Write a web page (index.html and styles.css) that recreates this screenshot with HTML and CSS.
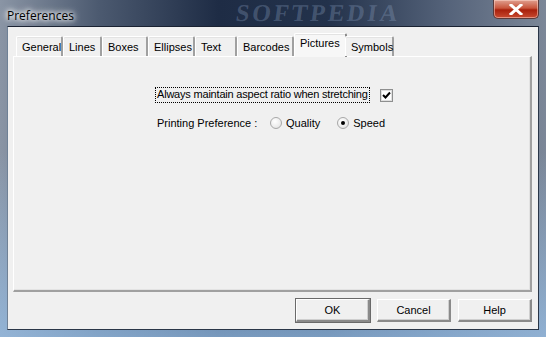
FILE: index.html
```html
<!DOCTYPE html>
<html lang="en">
<head>
  <meta charset="UTF-8">
  <title>Preferences</title>
  <link rel="stylesheet" href="styles.css">
</head>
<body>
  <div class="window">
    <div class="titlebar">
      <span class="title">Preferences</span>
      <span class="watermark">SOFTPEDIA</span>
      <button class="close" type="button">
        <svg width="14" height="11" viewBox="0 0 14 11">
          <path d="M2 1 L12 10 M12 1 L2 10" stroke="#ffffff" stroke-width="3" stroke-linecap="square"/>
        </svg>
      </button>
    </div>
    <div class="client">
      <div class="tabs">
        <div class="tab">General</div>
        <div class="tab">Lines</div>
        <div class="tab">Boxes</div>
        <div class="tab">Ellipses</div>
        <div class="tab tab-text">Text</div>
        <div class="tab">Barcodes</div>
        <div class="tab active">Pictures</div>
        <div class="tab">Symbols</div>
      </div>
      <div class="panel">
        <div class="row aspect-row">
          <span class="focus-label">Always maintain aspect ratio when stretching</span>
          <span class="checkbox">
            <svg width="9" height="9" viewBox="0 0 9 9">
              <path d="M1 4 L3.5 6.5 L8 1.5" stroke="#000" stroke-width="2" fill="none"/>
            </svg>
          </span>
        </div>
        <div class="row print-row">
          <span class="print-label">Printing Preference :</span>
          <span class="radio"></span>
          <span class="radio-label">Quality</span>
          <span class="radio checked"></span>
          <span class="radio-label">Speed</span>
        </div>
      </div>
      <div class="buttons">
        <button class="btn btn-default" type="button">OK</button>
        <button class="btn" type="button">Cancel</button>
        <button class="btn" type="button">Help</button>
      </div>
    </div>
  </div>
</body>
</html>
```

FILE: styles.css
```css
* {
    margin: 0;
    padding: 0;
    box-sizing: border-box;
}

body {
    width: 546px;
    height: 337px;
    overflow: hidden;
    font-family: 'Liberation Sans', Arial, sans-serif;
    font-size: 11px;
    color: #000;
    background: #1f2e47;
}

.window {
    width: 546px;
    height: 337px;
    display: flex;
    flex-direction: column;
    background:
        linear-gradient(180deg, rgba(0, 0, 0, 0) 45%, rgba(150, 190, 230, 0.75) 100%),
        linear-gradient(90deg, #8a95a5 0%, #4c5a70 18%, #1e2c45 40%, #23324b 60%, #55637a 82%, #7c8798 100%);
}

.titlebar {
    height: 28px;
    display: flex;
    align-items: flex-start;
    position: relative;
}

.title {
    padding: 7px 0 0 7px;
    font-family: 'Open Sans', 'Liberation Sans', sans-serif;
    font-size: 12px;
    color: #000;
    text-shadow: 0 0 8px #fff, 0 0 6px #fff, 0 0 4px #fff;
    position: relative;
    z-index: 1;
}

.watermark {
    position: absolute;
    left: 236px;
    top: 1px;
    font-family: 'Liberation Serif', serif;
    font-weight: bold;
    font-size: 24px;
    line-height: 24px;
    letter-spacing: 3px;
    color: rgba(150, 172, 205, 0.3);
    transform: skewX(-8deg);
}

.close {
    position: absolute;
    left: 493px;
    top: 0;
    width: 46px;
    height: 19px;
    border: 1px solid #5a3a3a;
    border-top: none;
    border-radius: 0 0 5px 5px;
    background: linear-gradient(180deg, #e0a090 0%, #c8553c 45%, #a8200c 55%, #c84a30 100%);
    box-shadow: inset 0 0 0 1px rgba(255, 220, 210, 0.5);
    display: flex;
    align-items: center;
    justify-content: center;
}

.client {
    flex: 1;
    margin: 0 7px 7px 7px;
    background: #f0f0f0;
    border-top: 1px solid #1a2232;
    border-left: 1px solid #6f8196;
    border-right: 1px solid #2a3648;
    border-bottom: 1px solid #2a3648;
    display: flex;
    flex-direction: column;
    padding: 6px 6px 7px 5px;
}

.tabs {
    display: flex;
    align-items: flex-end;
    height: 23px;
    padding-left: 3px;
    position: relative;
    z-index: 1;
}

.tab {
    height: 20px;
    padding: 4px 5px 0 5px;
    background: #f0f0f0;
    border-top: 1px solid #ffffff;
    border-left: 1px solid #ffffff;
    border-right: 2px solid #a0a0a0;
    border-radius: 2px 2px 0 0;
    box-shadow: inset 0 1px 0 #e3e3e3;
    white-space: nowrap;
}

.tab:nth-child(1) { width: 47px; }
.tab:nth-child(2) { width: 39px; }
.tab:nth-child(3) { width: 46px; }
.tab:nth-child(4) { width: 47px; }
.tab:nth-child(5) { width: 42px; }
.tab:nth-child(6) { width: 57px; }
.tab:nth-child(8) { width: 49px; }

.tab.active {
    width: 53px;
    height: 24px;
    margin: 0 -2px 0 0;
    padding-top: 3px;
    background: #f7f7f7;
    border-right: 2px solid #8a8a8a;
    margin-bottom: -1px;
}

.panel {
    height: 236px;
    background: #f0f0f0;
    border-top: 1px solid #ffffff;
    border-left: 1px solid #ffffff;
    border-right: 2px solid #a0a0a0;
    border-bottom: 2px solid #a0a0a0;
    box-shadow: inset -1px -1px 0 #e3e3e3;
    padding: 31px 0 0 142px;
    display: flex;
    flex-direction: column;
    gap: 15px;
}

.row {
    display: flex;
    align-items: center;
}

.focus-label {
    outline: 1px dotted #000;
    outline-offset: 0;
    padding: 0 1px;
    height: 14px;
    line-height: 13px;
    letter-spacing: -0.2px;
}

.checkbox {
    margin-left: 11px;
    width: 13px;
    height: 13px;
    border: 1px solid #8e8f8f;
    background: #fff;
    box-shadow: inset 0 0 0 1px #e0e0e0;
    display: flex;
    align-items: center;
    justify-content: center;
}

.print-row {
    padding-left: 1px;
}

.print-label {
    width: 113px;
}

.radio {
    width: 12px;
    height: 12px;
    border-radius: 50%;
    border: 1px solid #a8a8a8;
    background: radial-gradient(circle at 40% 35%, #ffffff 0%, #ececec 60%, #d6d6d6 100%);
    display: flex;
    align-items: center;
    justify-content: center;
}

.radio.checked::after {
    content: "";
    width: 4px;
    height: 4px;
    border-radius: 50%;
    background: #000;
}

.radio-label {
    margin-left: 4px;
    margin-right: 17px;
}

.buttons {
    display: flex;
    justify-content: flex-end;
    gap: 7px;
    margin-top: 7px;
}

.btn {
    width: 74px;
    height: 23px;
    font-family: 'Liberation Sans', Arial, sans-serif;
    font-size: 11px;
    color: #000;
    background: #f0f0f0;
    border-top: 1px solid #ffffff;
    border-left: 1px solid #ffffff;
    border-right: 2px solid #8a8a8a;
    border-bottom: 2px solid #8a8a8a;
    box-shadow: inset -1px -1px 0 #cfcfcf;
}

.btn-default {
    outline: 1px solid #6a6a6a;
    outline-offset: 0;
}
```
